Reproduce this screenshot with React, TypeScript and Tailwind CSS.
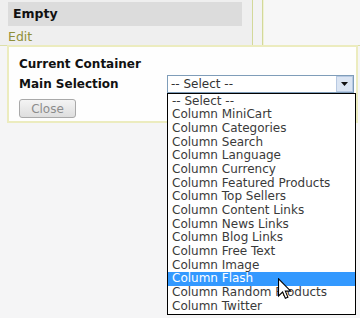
import React from "react";

const items = [
  "-- Select --",
  "Column MiniCart",
  "Column Categories",
  "Column Search",
  "Column Language",
  "Column Currency",
  "Column Featured Products",
  "Column Top Sellers",
  "Column Content Links",
  "Column News Links",
  "Column Blog Links",
  "Column Free Text",
  "Column Image",
  "Column Flash",
  "Column Random Products",
  "Column Twitter",
];

export default function App() {
  return (
    <div
      className="relative w-[360px] h-[318px] overflow-hidden bg-[#f5f5f6] text-[12px]"
      style={{ fontFamily: '"DejaVu Sans", Verdana, sans-serif' }}
    >
      {/* top region */}
      <div className="flex h-[46px] border-b border-[#dcdfa8]">
        <div className="w-[253px] bg-[#efefef] border-r border-[#d3d99a] pl-[8px] pr-[10px] pt-[2px]">
          <div className="h-[24px] bg-[#dcdcdc] pl-[5px] flex items-center font-bold text-[#111] text-[12.5px]">
            Empty
          </div>
          <div className="h-[19px] leading-[19px] text-[#8f8f38] text-[12.5px] mt-[1px]">Edit</div>
        </div>
        <div className="w-[10px] bg-[#f3f3f3] border-r border-[#d3d99a]" />
        <div className="flex-1 bg-[#f7f7f7] border-l border-[#f0f2d6]" />
      </div>

      {/* dialog */}
      <div className="ml-[7px] mr-[2px] -mt-[1px] h-[78px] border-2 border-[#ececbf] bg-[#fefefe] pl-[10px] pt-[8px]">
        <div className="h-[19px] leading-[19px] font-bold text-[#111]">Current Container</div>
        <div className="flex items-center h-[19px]">
          <div className="w-[148px] font-bold text-[#111]">Main Selection</div>
          <div className="relative w-[187px] h-[18px] border border-[#7f9db9] bg-white">
            <div className="pl-[3px] leading-[16px] text-[#333]">-- Select --</div>
            <div className="absolute right-0 top-0 w-[17px] h-[16px] bg-[#dbe5f3] border border-[#b7c9e2] flex items-center justify-center">
              <svg width="7" height="4" viewBox="0 0 7 4">
                <polygon points="0,0 7,0 3.5,4" fill="#111" />
              </svg>
            </div>
            {/* dropdown list */}
            <div className="absolute left-[-1px] top-[17px] w-[189px] h-[222px] border border-black bg-white z-10 pt-[1px]">
              {items.map((t, i) => (
                <div
                  key={t}
                  className={
                    i === 13
                      ? "h-[13.7px] leading-[13.7px] pl-[4px] bg-[#3399ff] text-white whitespace-nowrap"
                      : "h-[13.7px] leading-[13.7px] pl-[4px] text-[#3a3a3a] whitespace-nowrap"
                  }
                >
                  {t}
                </div>
              ))}
            </div>
          </div>
        </div>
        <div className="mt-[6px] w-[57px] h-[19px] border border-[#a9a9a9] rounded-[3px] bg-gradient-to-b from-[#f4f4f4] to-[#dedede] flex items-center justify-center text-[#8c8c8c]">
          Close
        </div>
      </div>

      {/* mouse cursor */}
      <svg
        className="absolute left-[278px] top-[278px] z-20"
        width="14"
        height="22"
        viewBox="0 0 13 20"
      >
        <path
          d="M0.5 0.5 L0.5 16.5 L4.3 12.8 L6.8 18.6 L9.2 17.6 L6.8 12 L11.8 12 Z"
          fill="white"
          stroke="black"
          strokeWidth="1"
          strokeLinejoin="miter"
        />
      </svg>
    </div>
  );
}
